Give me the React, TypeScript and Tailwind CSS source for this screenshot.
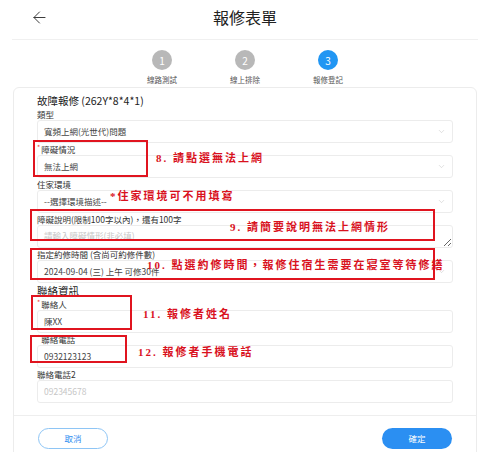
import { ArrowLeft, ChevronDown } from "lucide-react";
import type { ReactNode } from "react";

const steps = [
  { n: 1, label: "線路測試", active: false },
  { n: 2, label: "線上排除", active: false },
  { n: 3, label: "報修登記", active: true },
];

function Label({ children, required }: { children: ReactNode; required?: boolean }) {
  return (
    <div className="h-[12px] text-[8.5px] leading-[12px] text-[#333]">
      {required && <span className="mr-[1px] align-top text-[7px] leading-[9px] text-[#f03c3c]">*</span>}
      {children}
    </div>
  );
}

function Select({ value }: { value: string }) {
  return (
    <div className="flex h-[23px] items-center justify-between rounded-[3px] border border-[#ececec] pl-[6px] pr-[6px] text-[8.5px] text-[#444]">
      <span>{value}</span>
      <ChevronDown size={9} strokeWidth={1.5} color="#c9c9c9" />
    </div>
  );
}

function Input({ value, placeholder }: { value?: string; placeholder?: string }) {
  return (
    <div className="flex h-[23px] items-center rounded-[3px] border border-[#ececec] pl-[6px] text-[8.5px]">
      {value ? <span className="text-[#444]">{value}</span> : <span className="text-[#c6c6c6]">{placeholder}</span>}
    </div>
  );
}

// red annotation overlays drawn on top of the form
const note = "absolute whitespace-nowrap font-['Liberation_Serif','Noto_Sans_CJK_TC',serif] text-[11px] font-bold leading-[14px] tracking-[2px] text-[#d9121e]";
const box = "absolute border-2 border-[#e0141f]";

export default function App() {
  return (
    <div className="min-h-[452px] bg-white font-['Noto_Sans_CJK_TC',sans-serif]">
      <div className="ml-[12px] w-[466px]">
        <div className="grid h-[40px] grid-cols-[60px_1fr_60px] items-center border-b border-[#f0f0f0] pb-[5px]">
          <ArrowLeft className="ml-[18px]" size={19} strokeWidth={1.2} color="#333" />
          <h1 className="text-center text-[16px] leading-[20px] text-[#222]">報修表單</h1>
          <div />
        </div>

        <div className="flex justify-center pt-[10px] pb-[2px]">
          {steps.map((s) => (
            <div key={s.n} className="flex w-[83px] flex-col items-center">
              <div
                className={
                  s.active
                    ? "flex h-[20px] w-[20px] items-center justify-center rounded-full bg-[#2196f3] text-[10px] text-white"
                    : "flex h-[20px] w-[20px] items-center justify-center rounded-full bg-[#b8b8b8] text-[10px] text-white"
                }
              >
                {s.n}
              </div>
              <div className="mt-[5px] text-[7.5px] leading-[10px] text-[#555]">{s.label}</div>
            </div>
          ))}
        </div>

        <div className="relative mx-[1px] rounded-[6px] border border-[#ececec]">
          <div className="px-[23px] pt-[5px]">
            <div className="text-[10.5px] leading-[15px] text-[#222]">故障報修 (262Y*8*4*1)</div>
            <Label>類型</Label>
            <Select value="寬頻上網(光世代)問題" />
            <Label required>障礙情況</Label>
            <Select value="無法上網" />
            <Label>住家環境</Label>
            <Select value="--選擇環境描述--" />
            <Label>障礙說明(限制100字以內)，還有100字</Label>
            <textarea
              readOnly
              placeholder="請輸入障礙情形(非必填)"
              className="block h-[23px] w-full rounded-[3px] border border-[#ececec] px-[6px] pt-[3px] text-[8.5px] leading-[12px] outline-none placeholder:text-[#c6c6c6]"
            />
            <Label>指定約修時間 (含尚可約修件數)</Label>
            <Select value="2024-09-04 (三) 上午 可修30件" />
            <div className="text-[10.5px] leading-[15px] text-[#222]">聯絡資訊</div>
            <Label required>聯絡人</Label>
            <Input value="陳XX" />
            <Label required>聯絡電話</Label>
            <Input value="0932123123" />
            <Label>聯絡電話2</Label>
            <Input placeholder="092345678" />
          </div>

          <div className="mt-[12px] flex justify-between border-t border-[#eeeeee] px-[24px] pt-[12px] pb-[20px]">
            <button className="h-[21px] w-[70px] rounded-full border border-[#8ec5f5] text-[8.5px] text-[#2d8cf0]">取消</button>
            <button className="h-[21px] w-[70px] rounded-full bg-[#2b8ff2] text-[8.5px] text-white">確定</button>
          </div>

          <div className={box + " left-[19px] top-[52px] h-[37px] w-[115px]"} />
          <div className={box + " left-[16px] top-[121px] h-[32px] w-[405px]"} />
          <div className={box + " left-[16px] top-[160px] h-[32px] w-[405px]"} />
          <div className={box + " left-[17px] top-[207px] h-[35px] w-[101px]"} />
          <div className={box + " left-[16px] top-[247px] h-[28px] w-[97px]"} />

          <div className={note + " left-[142px] top-[63px]"}>8. 請點選無法上網</div>
          <div className={note + " left-[96px] top-[101px]"}>*住家環境可不用填寫</div>
          <div className={note + " left-[216px] top-[132px]"}>9. 請簡要說明無法上網情形</div>
          <div className={note + " left-[133px] top-[170px]"}>10. 點選約修時間，報修住宿生需要在寢室等待修繕</div>
          <div className={note + " left-[129px] top-[219px]"}>11. 報修者姓名</div>
          <div className={note + " left-[124px] top-[257px]"}>12. 報修者手機電話</div>
        </div>
      </div>
    </div>
  );
}
